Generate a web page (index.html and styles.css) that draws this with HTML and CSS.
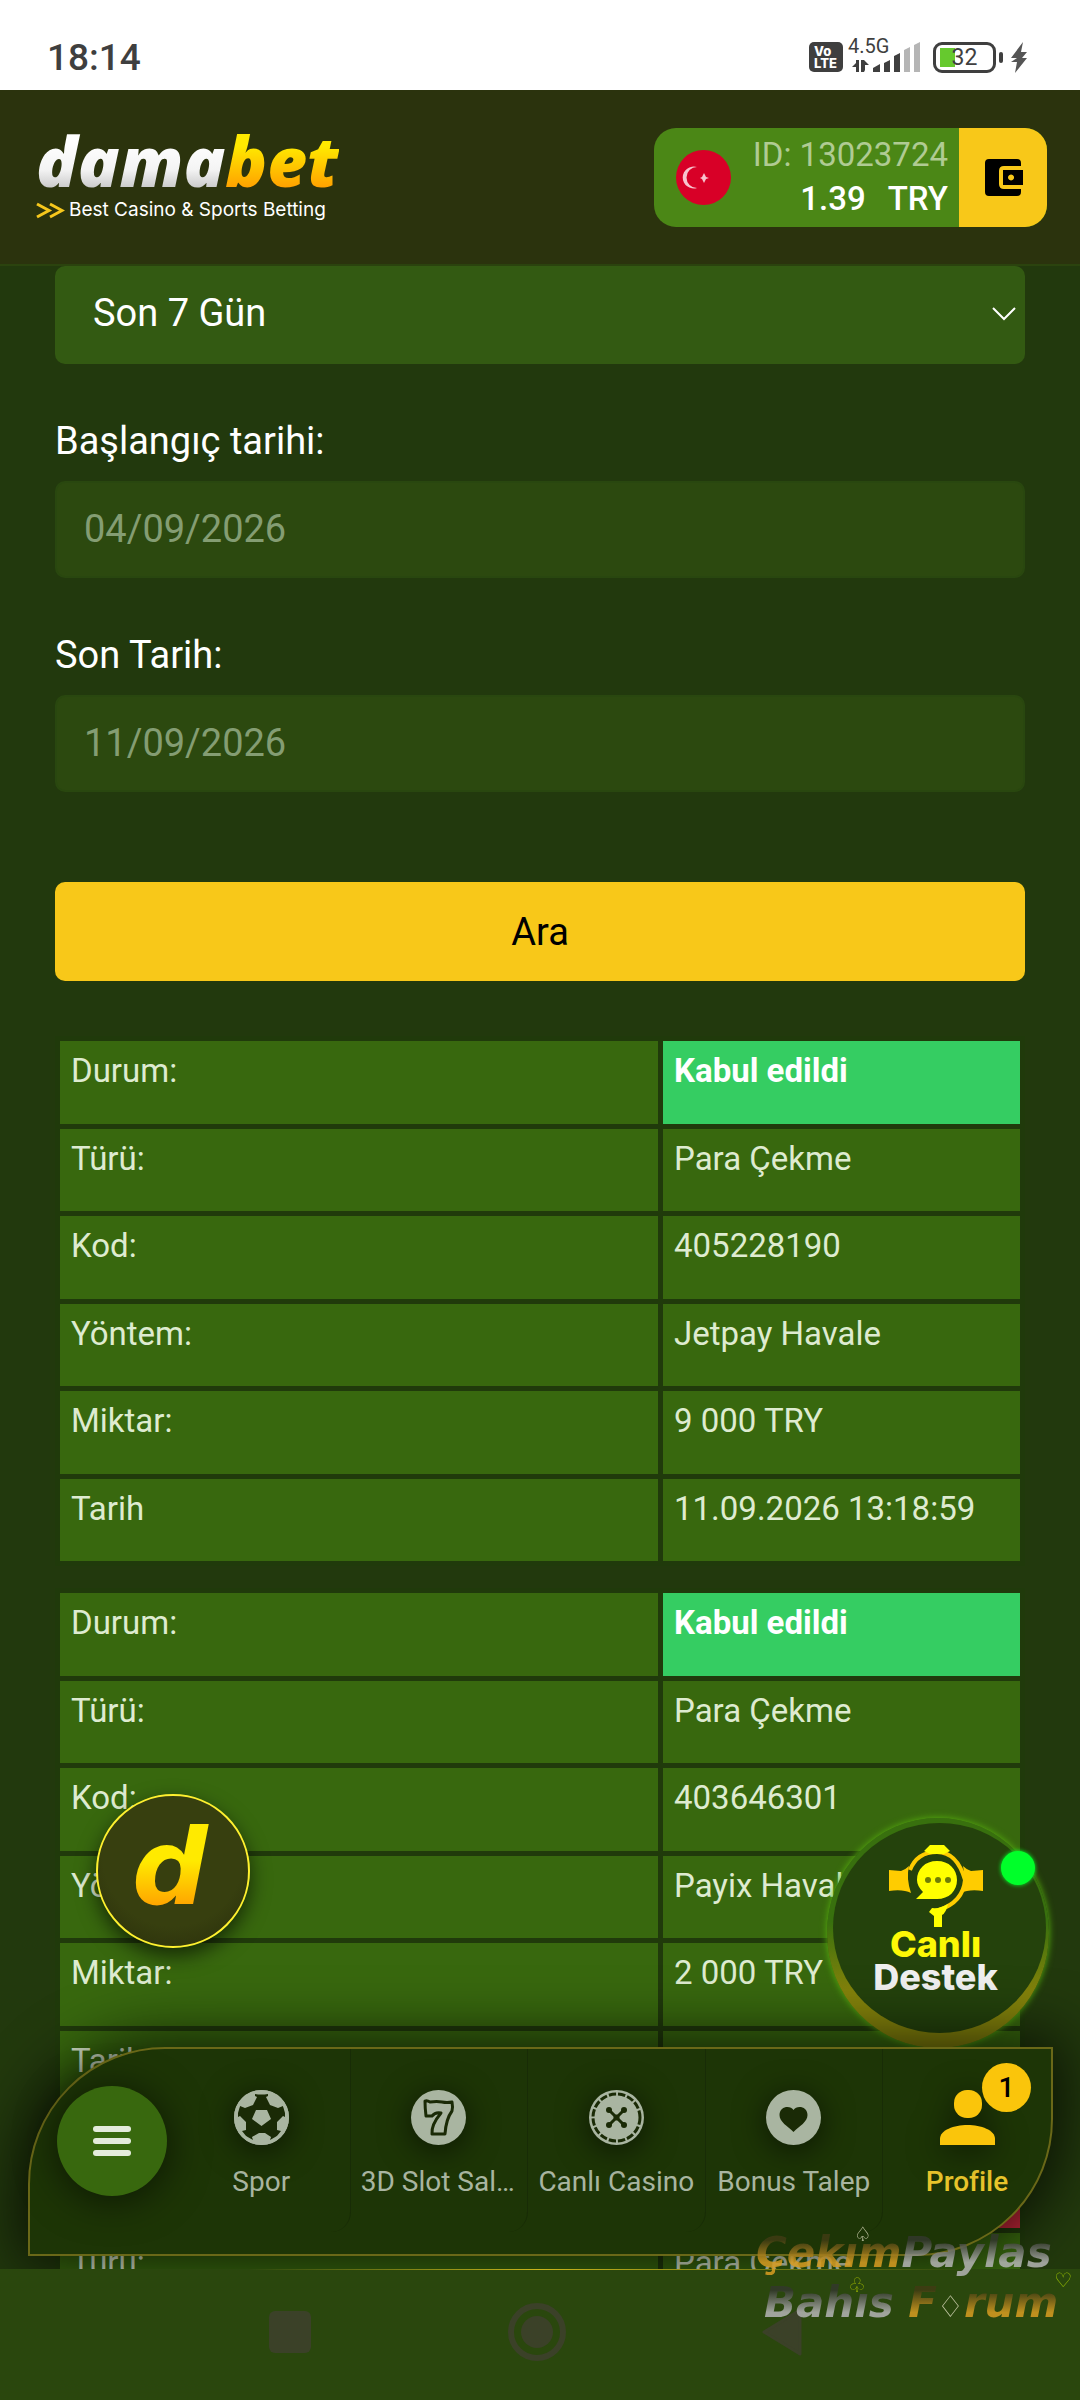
FILE: index.html
```html
<!DOCTYPE html>
<html lang="tr">
<head>
  <meta charset="UTF-8">
  <meta name="viewport" content="width=device-width, initial-scale=1">
  <title>damabet</title>
  <link rel="stylesheet" href="styles.css">
</head>
<body>
  <div class="status-bar">
    <span class="clock">18:14</span>
    <div class="status-icons">
      <span class="volte"><span>Vo</span><span>LTE</span></span>
      <div class="signal">
        <span class="network">4.5G</span>
        <svg width="70" height="30" viewBox="0 0 70 30">
          <g fill="#3f3f3f">
            <path d="M8 18v12h-3v-5h-4l4-4v-3zM10 30v-12h3l5 5h-4v5l-1 2z"/>
            <path d="M22 26l7-4v8h-7zM33 21l6-3v12h-6zM43 14l6-3v19h-6z"/>
          </g>
          <path fill="#b5b5b5" d="M53 8l6-3v25h-6zM63 3l6-3v30h-6z"/>
        </svg>
      </div>
      <div class="battery"><span>32</span></div>
      <svg class="bolt" width="18" height="31" viewBox="0 0 18 31"><path fill="#555" d="M13 0L1 16h6l-6 4h6l-2 11L17 16h-5l5-6h-6z"/></svg>
    </div>
  </div>

  <header class="header">
    <a href="#" class="logo">
      <span class="logo-name"><span class="logo-dama">dama</span><span class="logo-bet">bet</span></span>
      <span class="logo-tag">
        <svg width="29" height="17" viewBox="0 0 29 17" fill="none" stroke="#f6c71c" stroke-width="3"><path d="M1 2l12 6.500L1 15M14 2l12 6.500L14 15"/></svg>
        Best Casino &amp; Sports Betting
      </span>
    </a>
    <div class="account">
      <svg class="flag" width="55" height="55" viewBox="0 0 55 55">
        <circle cx="27.500" cy="27.500" r="27.500" fill="#d80027"/>
        <path fill="#f7c3cd" d="M21 17a11 11 0 1 0 0 21a10.500 10.500 0 0 1 0-21zM28 23l-2 4-2 1 2 1 2 4 2-4 3-1-3-1z"/>
      </svg>
      <div class="account-info">
        <span class="account-id">ID: 13023724</span>
        <span class="account-balance"><span>1.39</span><span>TRY</span></span>
      </div>
      <button class="wallet" aria-label="Cüzdan">
        <svg width="39" height="37" viewBox="0 0 39 37"><path d="M5 0h28q4 0 4 4v3H20q-5 0-5 5v13q0 5 5 5h17v3q0 4-4 4H5q-4 0-4-4V4q0-4 4-4z"/><path fill-rule="evenodd" d="M19 11h20v15H19zM27 15.500a3 3 0 1 0 .1 0z"/></svg>
      </button>
    </div>
  </header>

  <div class="content">
    <main class="page">
      <form class="filters">
        <div class="select-wrap">
          <select aria-label="Dönem">
            <option>Son 7 Gün</option>
          </select>
          <svg width="24" height="14" viewBox="0 0 24 14" fill="none" stroke="#fff" stroke-width="2"><path d="M1 1l11 11L23 1"/></svg>
        </div>
        <label for="start">Başlangıç tarihi:</label>
        <input id="start" type="text" value="04/09/2026">
        <label for="end">Son Tarih:</label>
        <input id="end" type="text" value="11/09/2026">
        <button type="button" class="search">Ara</button>
      </form>

      <table class="record">
        <tr><th scope="row">Durum:</th><td class="accepted">Kabul edildi</td></tr>
        <tr><th scope="row">Türü:</th><td>Para Çekme</td></tr>
        <tr><th scope="row">Kod:</th><td>405228190</td></tr>
        <tr><th scope="row">Yöntem:</th><td>Jetpay Havale</td></tr>
        <tr><th scope="row">Miktar:</th><td>9 000 TRY</td></tr>
        <tr><th scope="row">Tarih</th><td>11.09.2026 13:18:59</td></tr>
      </table>

      <table class="record">
        <tr><th scope="row">Durum:</th><td class="accepted">Kabul edildi</td></tr>
        <tr><th scope="row">Türü:</th><td>Para Çekme</td></tr>
        <tr><th scope="row">Kod:</th><td>403646301</td></tr>
        <tr><th scope="row">Yöntem:</th><td>Payix Havale</td></tr>
        <tr><th scope="row">Miktar:</th><td>2 000 TRY</td></tr>
        <tr><th scope="row">Tarih</th><td></td></tr>
      </table>

      <table class="record">
        <tr><th scope="row"></th><td class="rejected"></td></tr>
        <tr><th scope="row">Türü:</th><td>Para Çekme</td></tr>
      </table>
    </main>

    <button class="bubble" aria-label="damabet"><span>d</span></button>

    <button class="support">
      <span class="support-disc">
        <svg width="94" height="84" viewBox="0 0 94 84">
          <path fill="#fc0" d="M0 26l12 1q4-1 8-5-3 12 2 27-8-4-22-2zM94 26l-12 1q-4-1-8-5 3 12-2 27 8-4 22-2z"/>
          <path fill="none" stroke="#fc0" stroke-width="4" d="M21 26Q28 8 48 8T76 36Q74 58 50 66"/>
          <path fill="#ff0" d="M35 7l6-6h14l6 6-6 3H41zM40 68l3-4q8 1 16-4-2 9-6 11v12h-8V72z"/>
          <path fill="#ff0" d="M48 17c12 0 20 8 20 19s-8 19-20 19H27l7-7c-4-4-6-8-6-12 0-11 8-19 20-19z"/>
          <g fill="#6f7d06"><circle cx="39" cy="36" r="3"/><circle cx="49" cy="36" r="3"/><circle cx="59" cy="36" r="3"/></g>
        </svg>
        <span class="support-title">Canlı</span>
        <span class="support-sub">Destek</span>
      </span>
      <span class="online"></span>
    </button>

    <nav class="bottom-nav">
      <button class="menu" aria-label="Menü"><span></span><span></span><span></span></button>
      <a href="#">
        <svg width="55" height="55" viewBox="0 0 55 55">
          <circle cx="27.500" cy="27.500" r="27.500" fill="#a9b5a1"/>
          <path fill="#1a2a06" d="M21 4q6 1 13 0v2l-2 1 4 8 8 3 5-2 2 7v4l-2-1-6 6v8l4 1-4 5-7 4 1-3-6-4h-6l-7 4 1 3-7-4-4-5 4-1v-8l-6-6-2 1v-4l2-7 5 2 8-3 4-8-2-1z"/>
          <path fill="#a9b5a1" d="M27.500 43l9 4-3 7h-12l-3-7zM22 20h11l4 9-9.500 7-9.500-7z"/>
          <circle cx="27.500" cy="27.500" r="26" fill="none" stroke="#a9b5a1" stroke-width="3"/>
        </svg>
        <span>Spor</span>
      </a>
      <a href="#">
        <svg width="55" height="55" viewBox="0 0 55 55">
          <circle cx="27.500" cy="27.500" r="27.500" fill="#a9b5a1"/>
          <path fill="none" stroke="#1a2a06" stroke-width="3" stroke-linejoin="round" d="M14 11q2-1 5 1 7-1 12 0 5 1 10 0 1 5 0 9-6 8-7 23H21q-1-9 9-21-6-1-9 3h-6q-1-8-1-15z"/>
        </svg>
        <span>3D Slot Salonu</span>
      </a>
      <a href="#">
        <svg width="55" height="55" viewBox="0 0 55 55">
          <circle cx="27.500" cy="27.500" r="27.500" fill="#a9b5a1"/>
          <circle cx="27.500" cy="27.500" r="23.500" fill="none" stroke="#1a2a06" stroke-width="3" stroke-dasharray="7.300 2"/>
          <path stroke="#1a2a06" stroke-width="3" d="M20 20l15 15M35 20L20 35"/>
          <g fill="#1a2a06"><circle cx="20" cy="20" r="3"/><circle cx="35" cy="20" r="3"/><circle cx="20" cy="35" r="3"/><circle cx="35" cy="35" r="3"/><circle cx="27.500" cy="27.500" r="3"/></g>
        </svg>
        <span>Canlı Casino</span>
      </a>
      <a href="#">
        <svg width="55" height="55" viewBox="0 0 55 55">
          <circle cx="27.500" cy="27.500" r="27.500" fill="#a9b5a1"/>
          <path fill="#1a2a06" d="M27.500 20c3-5 14-4 14 5 0 7-8 11-14 17-6-6-14-10-14-17 0-9 11-10 14-5z"/>
        </svg>
        <span>Bonus Talep</span>
      </a>
      <a href="#" class="active">
        <svg width="55" height="55" viewBox="0 0 55 55" fill="#fac50b">
          <rect x="14" y="0" width="28" height="28" rx="13"/>
          <path d="M0 55v-6c0-9 14-14 27.500-14S55 40 55 49v6z"/>
        </svg>
        <span>Profile</span>
        <b class="badge">1</b>
      </a>
    </nav>
  </div>

  <div class="system-nav">
    <svg width="42" height="42"><rect width="42" height="42" rx="6" fill="#3b4128"/></svg>
    <svg width="58" height="58" viewBox="0 0 58 58"><circle cx="29" cy="29" r="26" fill="none" stroke="#3b4128" stroke-width="6"/><circle cx="29" cy="29" r="16" fill="#3b4128"/></svg>
    <svg width="42" height="48" viewBox="0 0 42 48"><path fill="#3b4128" d="M38 2v44L2 24z" stroke="#3b4128" stroke-width="3" stroke-linejoin="round"/></svg>
  </div>

  <div class="watermark">
    <p><span class="gold">Çekım</span><span class="silver">Paylas</span></p>
    <p class="second"><span class="silver">Bahıs</span> <span class="gold">F</span><span class="diamond">♢</span><span class="gold">rum</span></p>
    <span class="suit spade">♤</span>
    <span class="suit club">♧</span>
    <span class="suit heart">♡</span>
  </div>
</body>
</html>
```
FILE: styles.css
```css
* {
  box-sizing: border-box;
}

body {
  margin: 0;
  height: 100vh;
  display: flex;
  flex-direction: column;
  position: relative;
  overflow: hidden;
  background: #22390d;
  color: #fff;
  font-family: Roboto, sans-serif;
}

button,
input,
select {
  font-family: inherit;
  border: none;
}

a {
  color: inherit;
  text-decoration: none;
}

.status-bar {
  flex: none;
  height: 90px;
  padding: 24px 52px 0 47px;
  display: flex;
  align-items: center;
  justify-content: space-between;
  background: #fff;
  color: #3f3f3f;
}

.clock {
  font-size: 37px;
  font-weight: 500;
}

.status-icons {
  display: flex;
  align-items: center;
}

.volte {
  display: flex;
  flex-direction: column;
  justify-content: center;
  width: 34px;
  height: 30px;
  padding-left: 5px;
  border-radius: 5px;
  background: #3f3f3f;
  color: #fff;
  font: 800 13px/12px Inter, sans-serif;
}

.signal {
  position: relative;
  margin-left: 8px;
  height: 30px;
}

.network {
  position: absolute;
  left: -3px;
  top: -8px;
  font-size: 20px;
}

.battery {
  position: relative;
  width: 63px;
  height: 31px;
  margin-left: 12px;
  border: 3px solid #3f3f3f;
  border-radius: 9px;
  text-align: center;
  font-size: 23px;
  line-height: 26px;
  background: linear-gradient(#66c92e, #66c92e) 4px 3px / 15px 19px no-repeat;
}

.battery::after {
  content: "";
  position: absolute;
  right: -10px;
  top: 7px;
  width: 4px;
  height: 11px;
  border-radius: 2px;
  background: #3f3f3f;
}

.bolt {
  margin-left: 14px;
}

.header {
  flex: none;
  height: 176px;
  padding: 0 33px 0 36px;
  display: flex;
  align-items: center;
  justify-content: space-between;
  background: #2b330d;
  border-bottom: 2px solid #2b430e;
}

.logo {
  display: flex;
  flex-direction: column;
}

.logo-name {
  font: italic 800 69px/56px "Open Sans", sans-serif;
}

.logo-dama,
.logo-bet {
  background: linear-gradient(#fff 30%, #f4f4f4 60%, #aaa 95%);
  background-clip: text;
  -webkit-background-clip: text;
  color: transparent;
}

.logo-bet {
  background-image: linear-gradient(#ffea00 35%, #ff9800 85%);
}

.logo-tag {
  display: flex;
  align-items: center;
  gap: 4px;
  margin-top: 10px;
  font: 400 19px/24px Inter, sans-serif;
}

.account {
  display: flex;
  align-items: center;
  height: 99px;
  border-radius: 22px;
  overflow: hidden;
  background: #4b8716;
}

.flag {
  margin-left: 22px;
}

.account-info {
  display: flex;
  flex-direction: column;
  align-items: flex-end;
  margin: 0 11px 0 22px;
  font-size: 33px;
  line-height: 44px;
}

.account-id {
  color: #b0cb93;
}

.account-balance {
  display: flex;
  gap: 22px;
  font-weight: 500;
}

.wallet {
  align-self: stretch;
  width: 88px;
  padding: 0;
  display: flex;
  align-items: center;
  justify-content: center;
  background: #f8c819;
}

.content {
  flex: 1;
  min-height: 0;
  position: relative;
  overflow: hidden;
}

.page {
  padding: 0 55px;
}

.filters {
  display: flex;
  flex-direction: column;
  font-size: 38px;
}

.select-wrap {
  position: relative;
}

.select-wrap select {
  width: 100%;
  height: 98px;
  padding: 0 38px 4px;
  appearance: none;
  border-radius: 10px;
  background: #335a12;
  color: #fff;
  font-size: 38px;
}

.select-wrap svg {
  position: absolute;
  right: 9px;
  top: 41px;
  pointer-events: none;
}

.filters label {
  margin: 54px 0 17px;
  line-height: 46px;
}

.filters input {
  height: 97px;
  padding: 0 27px 2px;
  border: 2px solid #29470f;
  border-radius: 10px;
  background: #2c490f;
  color: #849d73;
  font-size: 38px;
}

.search {
  height: 99px;
  margin-top: 90px;
  border-radius: 10px;
  background: #f8c819;
  color: #000;
  font-size: 38px;
}

.record {
  width: 100%;
  margin-top: 22px;
  border-spacing: 5px;
  table-layout: fixed;
  background: #203a0b;
  color: #deebd0;
  font-size: 33px;
  line-height: 40px;
}

.filters + .record {
  margin-top: 55px;
}

.record th,
.record td {
  height: 83px;
  padding: 10px 11px;
  background: #38680e;
  text-align: left;
  vertical-align: top;
  font-weight: 400;
}

.record tr:nth-child(even) > * {
  height: 82px;
}

.record th {
  width: 598px;
}

.record .accepted {
  background: #35cd62;
  color: #fff;
  font-weight: 700;
}

.record .rejected {
  background: #c8283a;
}

.bubble {
  position: absolute;
  left: 96px;
  bottom: 321px;
  width: 154px;
  height: 154px;
  padding: 0;
  border: 2px solid #fff02f;
  border-radius: 50%;
  background: radial-gradient(circle at 50% 40%, #373f0f 60%, #272b0a);
  box-shadow: 0 8px 20px rgba(0, 0, 0, 0.6);
  font: italic 700 106px/120px "DejaVu Sans", sans-serif;
}

.bubble span {
  display: block;
  margin-top: 6px;
  padding: 0 6px 12px 0;
  background: linear-gradient(#ffea00 40%, #ff9800 80%);
  background-clip: text;
  -webkit-background-clip: text;
  color: transparent;
}

.support {
  position: absolute;
  right: 31px;
  bottom: 221px;
  width: 222px;
  height: 230px;
  padding: 5px 3px 5px 6px;
  border-radius: 50%;
  background: linear-gradient(#38700e 45%, #84830b 75%);
  box-shadow: 0 0 7px #58b40e;
}

.support-disc {
  display: flex;
  flex-direction: column;
  align-items: center;
  height: 210px;
  margin-bottom: 10px;
  padding: 21px 8px 0 0;
  border-radius: 50%;
  background: #24420c;
  font: 800 36px/33px Inter, sans-serif;
}

.support-title {
  color: #fdf806;
}

.support-sub {
  color: #f0f0f0;
}

.online {
  position: absolute;
  right: 14px;
  top: 33px;
  width: 34px;
  height: 34px;
  border-radius: 50%;
  background: #00ff2a;
  box-shadow: 0 0 4px #00ff2a;
}

.bottom-nav {
  position: absolute;
  left: 28px;
  right: 27px;
  bottom: 13px;
  height: 209px;
  display: grid;
  grid-template-columns: 143px repeat(4, 1fr) 168px;
  border: 2px solid #6a6818;
  border-radius: 137px 0;
  background: #1d3506;
  box-shadow: 0 0 60px 10px rgba(0, 0, 0, 0.7);
}

.menu {
  width: 110px;
  height: 110px;
  margin: 37px 0 0 27px;
  padding: 0;
  display: flex;
  flex-direction: column;
  align-items: center;
  justify-content: center;
  gap: 6px;
  border-radius: 50%;
  background: #38680e;
  box-shadow: 0 4px 40px rgba(0, 0, 0, 0.6);
}

.menu span {
  width: 38px;
  height: 6px;
  border-radius: 3px;
  background: #e4ecdc;
}

.bottom-nav a {
  position: relative;
  min-width: 0;
  padding-top: 41px;
  display: flex;
  flex-direction: column;
  align-items: center;
  color: #a9b5a1;
  font-size: 28px;
}

.bottom-nav a:not(.active) {
  margin-bottom: 22px;
  border-right: 1px solid #182c06;
  border-radius: 0 0 20px 0;
}

.bottom-nav a svg {
  flex: none;
  filter: drop-shadow(0 5px 16px rgba(0, 0, 0, 0.6));
}

.bottom-nav a span {
  width: 156px;
  margin-top: 20px;
  overflow: hidden;
  text-align: center;
  text-overflow: ellipsis;
  white-space: nowrap;
}

.bottom-nav .active {
  color: #e9c52c;
  font-weight: 500;
}

.badge {
  position: absolute;
  right: 20px;
  top: 14px;
  width: 49px;
  height: 49px;
  border-radius: 50%;
  background: #fac50b;
  color: #000;
  font-weight: 500;
  line-height: 49px;
  text-align: center;
}

.system-nav {
  flex: none;
  height: 131px;
  padding: 0 276px 5px 269px;
  display: flex;
  align-items: center;
  justify-content: space-between;
  background: linear-gradient(90deg, transparent 23%, #c9b41c 50%, transparent 90%) top / 100% 1px no-repeat #2a470d;
}

.watermark {
  position: absolute;
  right: 0;
  bottom: 68px;
  width: 324px;
  font: italic 700 42px/50px "DejaVu Sans", sans-serif;
  opacity: 0.85;
  pointer-events: none;
}

.watermark p {
  margin: 0;
  white-space: nowrap;
}

.watermark .second {
  padding-left: 8px;
}

.gold,
.silver {
  background: linear-gradient(#403c14 25%, #d99d22 70%);
  background-clip: text;
  -webkit-background-clip: text;
  color: transparent;
}

.silver {
  background-image: linear-gradient(#33382c 25%, #b5b5b5 70%);
}

.diamond,
.suit {
  color: #d8d8b8;
  font-style: normal;
  font-weight: 400;
}

.diamond {
  font-size: 30px;
}

.suit {
  position: absolute;
  font-size: 20px;
  line-height: 20px;
}

.spade {
  left: 98px;
  top: -4px;
}

.club {
  left: 92px;
  top: 47px;
  color: #a0b800;
}

.heart {
  right: 8px;
  top: 42px;
  color: #a0c800;
}
```
